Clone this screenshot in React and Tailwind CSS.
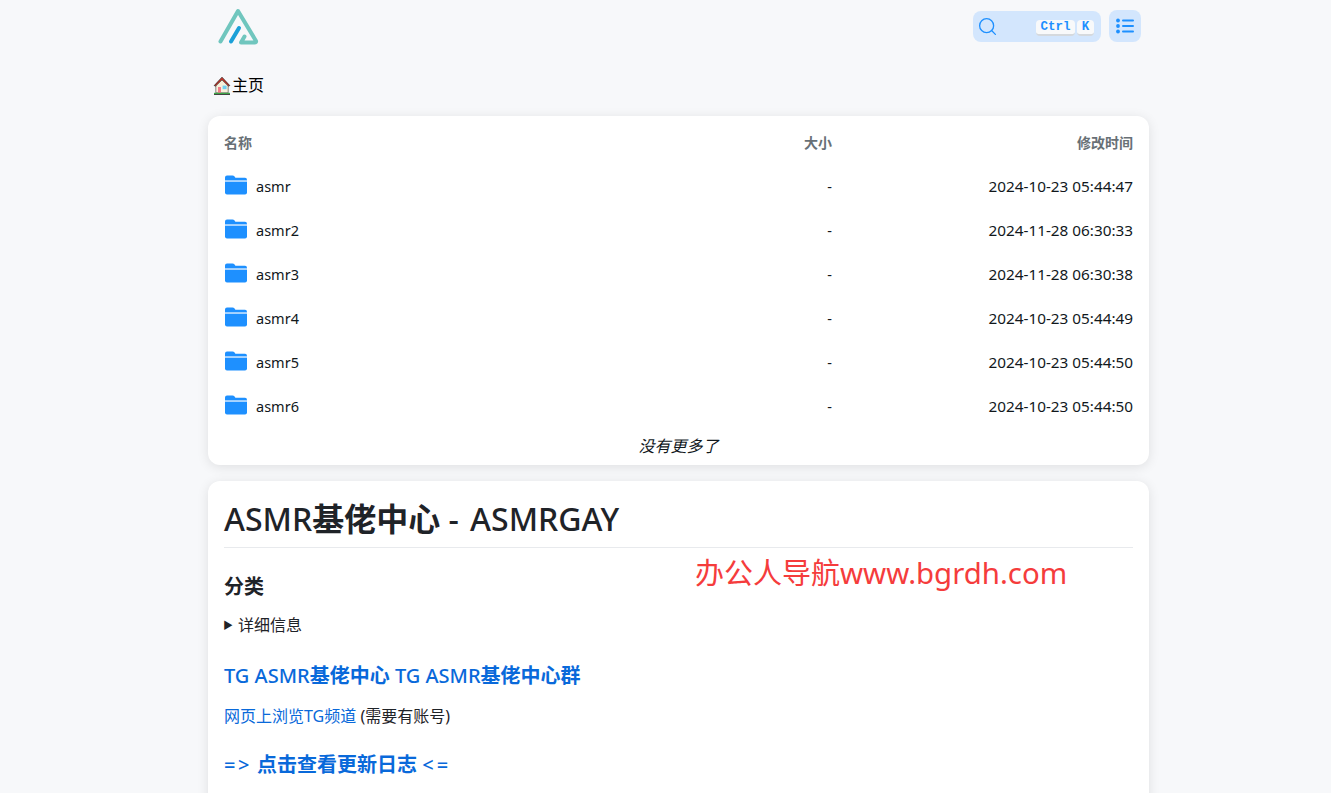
import { Search } from 'lucide-react';

const rows = [
  { name: 'asmr', date: '2024-10-23 05:44:47' },
  { name: 'asmr2', date: '2024-11-28 06:30:33' },
  { name: 'asmr3', date: '2024-11-28 06:30:38' },
  { name: 'asmr4', date: '2024-10-23 05:44:49' },
  { name: 'asmr5', date: '2024-10-23 05:44:50' },
  { name: 'asmr6', date: '2024-10-23 05:44:50' },
];

const Logo = () => (
  <svg width="44" height="40" viewBox="0 0 44 40" fill="none" strokeLinecap="round" strokeLinejoin="round">
    <path d="M4.5 35.5 L22 5 L40 35 Q40.5 36.5 38.5 36.5 L25 36.5 L28.5 30.5" stroke="#70c6be" strokeWidth="4" />
    <path d="M23 22 L15 35.5" stroke="#1ba0d8" strokeWidth="4" />
  </svg>
);

const House = () => (
  <svg width="18" height="19" viewBox="0 0 18 19" className="shrink-0">
    <path d="M2.8 8.5 L9 3 L15.2 8.5 L15.2 16.8 L2.8 16.8 Z" fill="#f8f0da" stroke="#3a3a3a" strokeWidth="0.6" />
    <path d="M1.2 9.6 L9 1.2 L16.8 9.6 L15.4 10 L9 3.8 L2.6 10 Z" fill="#d8392b" stroke="#1a1a1a" strokeWidth="0.7" strokeLinejoin="round" />
    <rect x="5" y="11" width="3" height="5.8" fill="#f47c8a" />
    <rect x="9.6" y="9.6" width="4" height="3.6" fill="#6fd0f2" />
    <rect x="1" y="16.8" width="16" height="1.3" fill="#3fa648" />
    <rect x="1" y="18.1" width="16" height="0.8" fill="#1a1a1a" />
  </svg>
);

const Folder = () => (
  <svg width="24" height="20" viewBox="0 0 24 20" className="shrink-0">
    <path d="M1 2.5 Q1 0.5 3 0.5 L8.5 0.5 Q9.8 0.5 10.6 1.6 L11.4 2.8 L21 2.8 Q23 2.8 23 5 L23 5.4 L1 5.4 Z" fill="#1e90ff" />
    <path d="M1 7 L23 7 L23 17.5 Q23 19.5 21 19.5 L3 19.5 Q1 19.5 1 17.5 Z" fill="#1e90ff" />
    <rect x="1" y="5.4" width="22" height="1.6" fill="#a9d4ff" />
  </svg>
);

const ListIcon = () => (
  <svg width="18" height="16" viewBox="0 0 18 16" fill="#1e90ff">
    <circle cx="2" cy="2.5" r="1.9" />
    <circle cx="2" cy="8" r="1.9" />
    <circle cx="2" cy="13.5" r="1.9" />
    <rect x="6" y="1.4" width="12" height="2.2" rx="1" />
    <rect x="6" y="6.9" width="12" height="2.2" rx="1" />
    <rect x="6" y="12.4" width="12" height="2.2" rx="1" />
  </svg>
);

const Kbd = ({ children, className }) => (
  <span className={`flex h-4 items-center justify-center rounded-[4px] bg-[#f8f9fa] border-b-2 border-[#d5d9dd] font-['Liberation_Mono',monospace] text-[12.5px] font-bold text-[#1e90ff] ${className}`}>
    {children}
  </span>
);

export default function App() {
  return (
    <div className="relative h-[793px] overflow-hidden bg-[#f7f8fa] font-['Noto_Sans','Noto_Sans_CJK_SC',sans-serif] text-black">
      <div className="ml-[208px] w-[941px]">
        {/* Header */}
        <header className="flex h-[52px] items-center justify-between pl-2 pr-2">
          <Logo />
          <div className="flex items-center gap-2">
            <div className="flex h-[31px] w-[128px] items-center justify-between rounded-lg bg-[#d3e6fd] pl-[4px] pr-[7px]">
              <Search size={21} strokeWidth={1.5} color="#1e90ff" />
              <div className="flex gap-[2px] translate-y-[2px]">
                <Kbd className="w-[39px]">Ctrl</Kbd>
                <Kbd className="w-[17px]">K</Kbd>
              </div>
            </div>
            <button className="flex h-8 w-8 items-center justify-center rounded-lg bg-[#d3e6fd]">
              <ListIcon />
            </button>
          </div>
        </header>

        {/* Breadcrumb */}
        <div className="flex h-6 items-center pl-[5px] mt-[21px] text-[16px]">
          <House />
          <span className="ml-px">主页</span>
        </div>

        {/* File list */}
        <section className="mt-[19px] h-[349px] rounded-xl bg-white px-4 shadow-[0_2px_12px_rgba(0,0,0,0.1)]">
          <div className="flex h-[49px] items-center pt-[3px] text-[14px] font-bold text-[#687076]">
            <div className="flex-1">名称</div>
            <div className="w-[100px] text-right">大小</div>
            <div className="w-[301px] text-right">修改时间</div>
          </div>
          {rows.map((r) => (
            <div key={r.name} className="flex h-[44px] items-center text-[14.5px] text-[#11181c]">
              <div className="flex flex-1 items-center gap-2 -translate-y-[2px]">
                <Folder />
                <span className="translate-y-[2px]">{r.name}</span>
              </div>
              <div className="w-[100px] text-right">-</div>
              <div className="w-[301px] text-right text-[15.3px] -translate-y-px">{r.date}</div>
            </div>
          ))}
          <p className="pt-[5px] text-center text-[16px] italic text-[#11181c]">没有更多了</p>
        </section>

        {/* Readme */}
        <section className="mt-4 h-[400px] rounded-xl bg-white p-4 text-[#1f2328] shadow-[0_2px_12px_rgba(0,0,0,0.1)]">
          <h1 className="w-[909px] border-b border-[#e8eaed] pb-[7px] text-[32px] leading-[43px] font-medium">
            ASMR<b className="font-bold">基佬中心</b> <span className="tracking-[3px]">-</span> ASMRGAY
          </h1>
          <h3 className="mt-[25px] text-[20px] leading-[28px] font-bold">分类</h3>
          <div className="mt-[12px] flex h-6 items-center text-[16px]">
            <span className="-ml-px mr-[5px] text-[10px] leading-none">▶</span>详细信息
          </div>
          <h3 className="mt-[25px] text-[20px] leading-[28px] font-medium text-[#0969da]">
            TG ASMR<b className="font-bold">基佬中心</b> TG ASMR<b className="font-bold">基佬中心群</b>
          </h3>
          <p className="mt-[14px] text-[16px] leading-[24px]"><a className="text-[#0969da]">网页上浏览TG频道</a> (需要有账号)</p>
          <h3 className="mt-[23px] text-[20px] leading-[28px] font-bold text-[#0969da]">
            <span className="font-medium tracking-[2.5px]">=&gt;</span> 点击查看更新日志 <span className="font-medium tracking-[3px]">&lt;=</span>
          </h3>
        </section>
      </div>

      {/* Watermark */}
      <div className="absolute left-[695px] top-[553px] text-[29px] leading-[40px] whitespace-nowrap text-[#f53c3c]">办公人导航<span className="text-[29.4px]">www.bgrdh.com</span></div>
    </div>
  );
}
